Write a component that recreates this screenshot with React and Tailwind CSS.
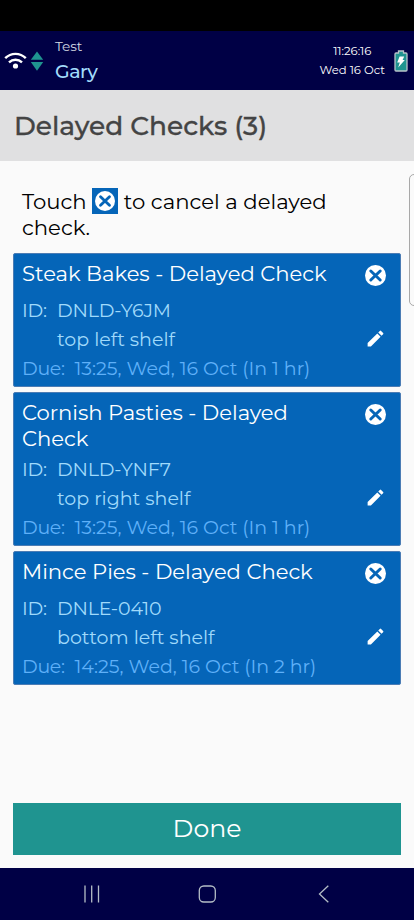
import React from 'react';
import { MdEdit } from 'react-icons/md';

const checks = [
  {
    id: 'DNLD-Y6JM',
    name: 'Steak Bakes - Delayed Check',
    note: 'top left shelf',
    due: '13:25, Wed, 16 Oct (In 1 hr)',
  },
  {
    id: 'DNLD-YNF7',
    name: 'Cornish Pasties - Delayed Check',
    note: 'top right shelf',
    due: '13:25, Wed, 16 Oct (In 1 hr)',
  },
  {
    id: 'DNLE-0410',
    name: 'Mince Pies - Delayed Check',
    note: 'bottom left shelf',
    due: '14:25, Wed, 16 Oct (In 2 hr)',
  },
];

const CancelIcon = ({ className }) => (
  <svg className={className} viewBox="0 0 21 21">
    <circle cx="10.5" cy="10.5" r="10.5" fill="white" />
    <path d="M5.8 6l9.4 9M15.2 6l-9.4 9" stroke="#0565b8" strokeWidth="3" strokeLinecap="round" />
  </svg>
);

const StatusBar = () => (
  <header className="flex h-[59px] shrink-0 items-start bg-[#000045] text-white">
    <svg className="mt-[21px] ml-[4px] h-[18px] w-[23px]" viewBox="0 0 23 18" fill="none" stroke="white" strokeWidth="2.4">
      <path d="M1.2 6.2C7 0.4 16 0.4 21.8 6.2" />
      <path d="M5 10.4C8.8 6.8 14.2 6.8 18 10.4" />
      <circle cx="11.5" cy="14" r="2.6" fill="white" stroke="none" />
    </svg>
    <svg className="mt-[20px] ml-[3px] h-[20px] w-[14px]" viewBox="0 0 14 20" fill="#1f9490">
      <path d="M7 0.5L13.2 8.8H0.8z" />
      <path d="M7 19.8L13.2 11H0.8z" />
    </svg>
    <div className="ml-[11px] flex-1">
      <div className="mt-[6px] text-[13.7px] leading-[18px] tracking-[-0.1px] text-[#d3d8e2]">Test</div>
      <div className="mt-[4px] text-[19px] leading-[25px] font-medium tracking-[-0.5px] text-[#a3dcfb]">Gary</div>
    </div>
    <div className="mr-[9px] pt-[11px] text-center text-[11.6px] leading-[18.5px]">
      <div>11:26:16</div>
      <div>Wed 16 Oct</div>
    </div>
    <svg className="mt-[19px] mr-[6px] h-[22px] w-[14px]" viewBox="0 0 14 22">
      <path
        d="M4.5 1h5v2H12a1 1 0 0 1 1 1v16a1 1 0 0 1-1 1H2a1 1 0 0 1-1-1V4a1 1 0 0 1 1-1h2.5z"
        fill="#1f9490"
        stroke="#b9c3c9"
        strokeWidth="1.3"
      />
      <path d="M5.6 6.5h4.6L8.6 10h2.2L4.2 17.6l1.6-5.2H3.2z" fill="white" />
    </svg>
  </header>
);

const CheckCard = ({ check }) => (
  <li className="flex rounded-[2px] border border-[#4b7cb4] bg-[#0565b8] pt-[7px] pr-[14px] pb-[3px] pl-[8px]">
    <div className="flex-1">
      <h2 className="min-h-[32px] max-w-[320px] text-[21.15px] leading-[26px] tracking-[-0.03px] text-white">{check.name}</h2>
      <div className="mt-[3px] text-[19px] leading-[29px] text-[#a0dafb]">
        <div className="flex">
          <span className="w-[35px] tracking-[-0.2px]">ID:</span>
          <span className="tracking-[-0.2px]">{check.id}</span>
        </div>
        <div className="pl-[35px]">{check.note}</div>
      </div>
      <div className="flex text-[19px] leading-[29px] text-[#5fb0f8]">
        <span className="w-[52.5px] tracking-[-0.3px]">Due:</span>
        <span className="tracking-[-0.03px]">{check.due}</span>
      </div>
    </div>
    <div className="flex flex-col items-center justify-between pt-[4.5px] pb-[34px]">
      <button type="button" aria-label="Cancel check">
        <CancelIcon className="block h-[21px] w-[21px]" />
      </button>
      <button type="button" aria-label="Edit check" className="text-white">
        <MdEdit className="block h-[21px] w-[21px]" />
      </button>
    </div>
  </li>
);

const NavBar = () => (
  <nav className="flex h-[52px] shrink-0 items-center bg-[#000045]">
    <svg className="ml-[82px] h-[20px] w-[20px]" viewBox="0 0 20 20" stroke="#b4bdc6" strokeWidth="1.3">
      <path d="M3 1.5v17M9.7 1.5v17M16.5 1.5v17" />
    </svg>
    <svg className="ml-[95px] h-[20px] w-[20px]" viewBox="0 0 20 20" fill="none" stroke="#b4bdc6" strokeWidth="1.3">
      <rect x="2.3" y="2" width="16" height="16" rx="4.5" />
    </svg>
    <svg className="ml-[97px] h-[20px] w-[20px]" viewBox="0 0 20 20" fill="none" stroke="#b4bdc6" strokeWidth="1.3">
      <path d="M14.3 1.8L5.5 10l8.8 8.2" />
    </svg>
  </nav>
);

const App = () => {
  return (
    <div className="flex h-[920px] w-[414px] flex-col overflow-hidden bg-[#fafafa] font-['Montserrat','Inter',sans-serif]">
      <div className="h-[31px] shrink-0 bg-black" />
      <StatusBar />
      <div className="flex h-[71px] shrink-0 items-center bg-[#e0e0e1] pl-[14px]">
        <h1 className="text-[26.4px] leading-[32px] font-medium text-[#444444] [-webkit-text-stroke:0.3px_#444444]">
          Delayed Checks (3)
        </h1>
      </div>

      <main className="relative flex flex-1 flex-col px-[13px] pb-[13px]">
        <p className="mt-[27px] pl-[9px] text-[21.2px] leading-[26px] text-black">
          Touch{' '}
          <span className="inline-flex h-[26px] w-[26px] items-center justify-center bg-[#0565b8] align-top">
            <CancelIcon className="h-[20px] w-[20px]" />
          </span>{' '}
          to cancel a delayed
          <br />
          check.
        </p>
        <ul className="mt-[12.5px] flex flex-col gap-[5px]">
          {checks.map((check) => (
            <CheckCard key={check.id} check={check} />
          ))}
        </ul>
        <button type="button" className="mt-auto h-[52px] w-full bg-[#1f9490] text-[25.2px] text-white">
          Done
        </button>
        {/* edge panel handle */}
        <div className="absolute top-[13px] -right-[6px] h-[132px] w-[11px] rounded-[5px] border border-[#a8a8a8]" />
      </main>
      <NavBar />
    </div>
  );
};

export default App;
